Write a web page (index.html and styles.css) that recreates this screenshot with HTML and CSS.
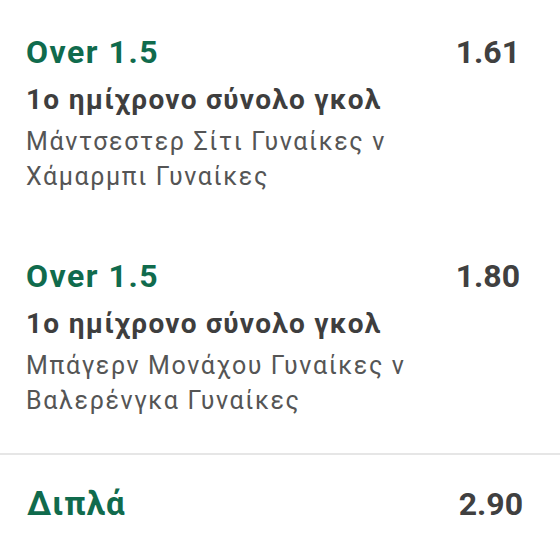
FILE: index.html
```html
<!DOCTYPE html>
<html>
<head>
    <title>Betslip</title>
    <meta name="viewport" content="width=device-width, initial-scale=1">
    <link rel="stylesheet" href="styles.css">
</head>
<body>
    <div class="slip">
        <div class="selection">
            <div class="sel-head">
                <span class="sel-name">Over 1.5</span>
                <span class="sel-odds">1.61</span>
            </div>
            <div class="market">1o ημίχρονο σύνολο γκολ</div>
            <div class="event">Μάντσεστερ Σίτι Γυναίκες ν Χάμαρμπι Γυναίκες</div>
        </div>

        <div class="selection">
            <div class="sel-head">
                <span class="sel-name">Over 1.5</span>
                <span class="sel-odds">1.80</span>
            </div>
            <div class="market">1o ημίχρονο σύνολο γκολ</div>
            <div class="event">Μπάγερν Μονάχου Γυναίκες ν Βαλερένγκα Γυναίκες</div>
        </div>

        <div class="total">
            <span class="total-name">Διπλά</span>
            <span class="total-odds">2.90</span>
        </div>
    </div>
</body>
</html>
```

FILE: styles.css
```css
body {
    margin: 0;
    font-family: Roboto, "Liberation Sans", sans-serif;
    background: #fff;
    color: #3d3d3d;
}
.slip {
    width: 560px;
}
.selection {
    padding: 32px 40px 30px 26px;
    height: 224px;
    box-sizing: border-box;
}
.sel-head {
    display: flex;
    justify-content: space-between;
    align-items: baseline;
    line-height: 40px;
    font-size: 32px;
    font-weight: 700;
}
.sel-name {
    color: #106b4d;
    letter-spacing: 1.5px;
}
.sel-odds {
    color: #404040;
}
.market {
    margin-top: 10px;
    font-size: 28px;
    line-height: 36px;
    font-weight: 700;
    color: #3e3e3e;
    letter-spacing: 1.3px;
}
.event {
    margin-top: 6px;
    font-size: 25px;
    line-height: 35px;
    color: #555;
    letter-spacing: 1.6px;
    width: 420px;
}
.total {
    border-top: 2px solid #e6e6e6;
    margin-top: 5px;
    padding: 29px 37px 0 27px;
    display: flex;
    justify-content: space-between;
    align-items: baseline;
    line-height: 40px;
    font-size: 32px;
    font-weight: 700;
}
.total-name {
    color: #106b4d;
    font-size: 33px;
    letter-spacing: 1.2px;
}
.total-odds {
    color: #404040;
}
```
